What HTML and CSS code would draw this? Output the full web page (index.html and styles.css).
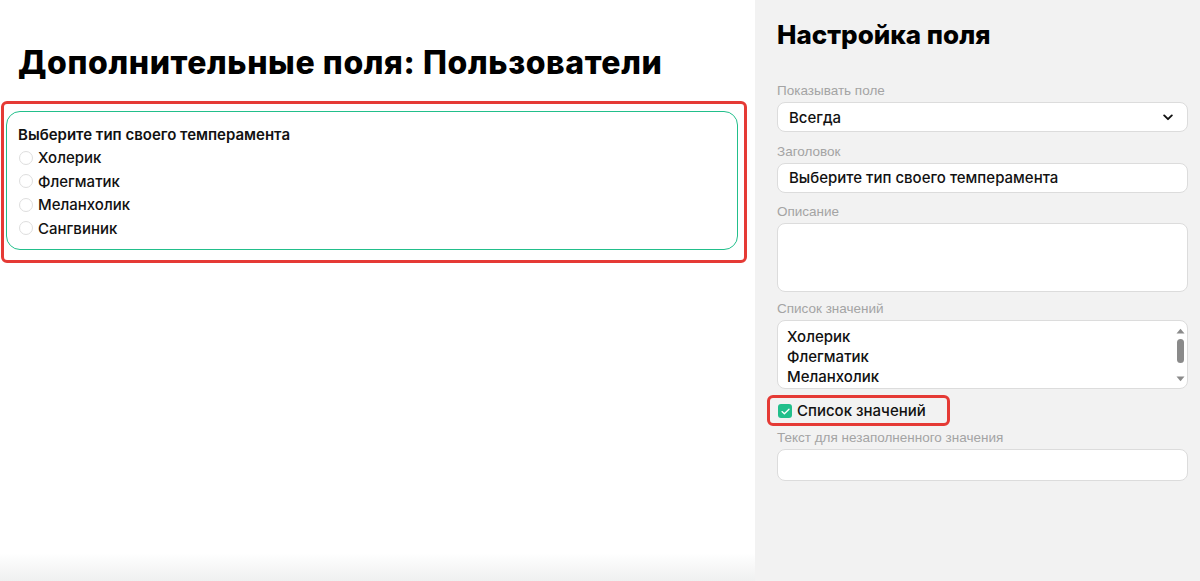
FILE: index.html
```html
<!DOCTYPE html>
<html lang="ru">
<head>
    <meta charset="UTF-8">
    <meta name="viewport" content="width=device-width, initial-scale=1.0">
    <title>Дополнительные поля: Пользователи</title>
    <link rel="stylesheet" href="styles.css">
</head>
<body>
    <main class="preview">
        <h1 class="page-title">Дополнительные поля: Пользователи</h1>
        <div class="highlight highlight-preview">
            <div class="field-card">
                <div class="field-card-title">Выберите тип своего темперамента</div>
                <label class="radio-row"><input type="radio" name="temper"> Холерик</label>
                <label class="radio-row"><input type="radio" name="temper"> Флегматик</label>
                <label class="radio-row"><input type="radio" name="temper"> Меланхолик</label>
                <label class="radio-row"><input type="radio" name="temper"> Сангвиник</label>
            </div>
        </div>
    </main>

    <aside class="settings">
        <h2 class="settings-title">Настройка поля</h2>

        <div class="form-group form-group-first">
            <label class="form-label">Показывать поле</label>
            <div class="select-box">
                <span>Всегда</span>
                <svg class="chevron" width="10" height="7" viewBox="0 0 10 7">
                    <path d="M1.2 1.4 L5 5.2 L8.8 1.4" fill="none" stroke="#111" stroke-width="1.9" stroke-linecap="round" stroke-linejoin="round"/>
                </svg>
            </div>
        </div>

        <div class="form-group">
            <label class="form-label">Заголовок</label>
            <div class="text-input">Выберите тип своего темперамента</div>
        </div>

        <div class="form-group form-group-desc">
            <label class="form-label">Описание</label>
            <div class="text-area"></div>
        </div>

        <div class="form-group form-group-tight">
            <label class="form-label">Список значений</label>
            <div class="list-box">
                <div class="list-lines">
                    <div>Холерик</div>
                    <div>Флегматик</div>
                    <div>Меланхолик</div>
                </div>
                <div class="scrollbar">
                    <svg width="9" height="6" viewBox="0 0 9 6"><path d="M0.5 5.5 L4.5 0.8 L8.5 5.5 Z" fill="#8a8a8a"/></svg>
                    <div class="scroll-thumb"></div>
                    <svg class="scroll-down" width="9" height="6" viewBox="0 0 9 6"><path d="M0.5 0.5 L4.5 5.2 L8.5 0.5 Z" fill="#8a8a8a"/></svg>
                </div>
            </div>
        </div>

        <div class="highlight highlight-check">
            <label class="check-row">
                <span class="check-box">
                    <svg width="9" height="7" viewBox="0 0 9 7"><path d="M1 3.6 L3.4 5.8 L8 1.2" fill="none" stroke="#fff" stroke-width="1.3" stroke-linecap="round" stroke-linejoin="round"/></svg>
                </span>
                Список значений
            </label>
        </div>

        <div class="form-group">
            <label class="form-label">Текст для незаполненного значения</label>
            <div class="text-input text-input-tall"></div>
        </div>
    </aside>
</body>
</html>
```

FILE: styles.css
```css
body {
    margin: 0;
    padding: 0;
    display: flex;
    height: 100vh;
    overflow: hidden;
    font-family: 'Inter', 'Noto Sans', sans-serif;
    color: #111;
}

.preview {
    flex: 0 0 755px;
    background: linear-gradient(to bottom, #ffffff calc(100% - 28px), #eff0f0);
}

.page-title {
    margin: 44px 0 19px 18px;
    font-size: 32px;
    line-height: 38px;
    font-weight: 800;
    letter-spacing: 0.6px;
    color: #000;
}

.highlight {
    border: 3px solid #e53a35;
    border-radius: 6px;
}

.highlight-preview {
    margin-left: 1px;
    width: 746px;
    padding: 7px 6px 10px 2px;
    box-sizing: border-box;
}

.field-card {
    border: 1.5px solid #22bf8b;
    border-radius: 14px;
    padding: 12px 11px 9px 11px;
}

.field-card-title {
    font-size: 15px;
    line-height: 22px;
    font-weight: 600;
}

.radio-row {
    display: flex;
    align-items: center;
    gap: 5px;
    font-size: 15px;
    line-height: 23.5px;
    font-weight: 500;
}

.radio-row input {
    appearance: none;
    margin: 0 0 0 1px;
    width: 14px;
    height: 14px;
    border: 1px solid #dedede;
    border-radius: 50%;
    background: #fff;
}

.settings {
    flex: 1;
    background: #f2f2f2;
    padding: 0 12px 0 22px;
}

.settings-title {
    margin: 20px 0 33px 0;
    font-size: 26px;
    line-height: 30px;
    font-weight: 800;
    color: #000;
}

.form-group {
    margin-bottom: 11px;
}

.form-group-first {
    margin-bottom: 12px;
}

.form-group-desc {
    margin-bottom: 9px;
}

.form-group-tight {
    margin-bottom: 6px;
}

.form-label {
    display: block;
    font-family: 'Liberation Sans', Arial, sans-serif;
    font-size: 13.5px;
    line-height: 16px;
    color: #a4a4a4;
    margin-bottom: 3px;
}

.select-box,
.text-input,
.text-area,
.list-box {
    background: #fff;
    border: 1px solid #dcdcdc;
    border-radius: 8px;
    box-sizing: border-box;
    font-size: 15px;
    font-weight: 500;
}

.select-box {
    height: 30px;
    display: flex;
    align-items: center;
    justify-content: space-between;
    padding: 0 14px 0 11px;
}

.text-input {
    height: 30px;
    line-height: 28px;
    padding: 0 11px;
}

.text-input-tall {
    height: 32px;
}

.text-area {
    height: 69px;
}

.list-box {
    height: 69px;
    display: flex;
    justify-content: space-between;
    padding: 6px 2px 0 9px;
    overflow: hidden;
}

.list-lines {
    line-height: 20px;
}

.scrollbar {
    width: 10px;
    display: flex;
    flex-direction: column;
    align-items: center;
    padding-top: 1px;
}

.scroll-thumb {
    width: 7px;
    height: 24px;
    margin-top: 5px;
    border-radius: 4px;
    background: #8a8a8a;
}

.scroll-down {
    margin-top: 13px;
}

.highlight-check {
    display: inline-block;
    margin-left: -10px;
    padding: 2px 21px 1px 8px;
}

.check-row {
    display: flex;
    align-items: center;
    gap: 5px;
    font-size: 15px;
    line-height: 22px;
    font-weight: 500;
}

.check-box {
    width: 14px;
    height: 14px;
    border-radius: 3px;
    background: #22bf8b;
    display: flex;
    align-items: center;
    justify-content: center;
}

.highlight-check + .form-group {
    margin-top: 4px;
}
```
